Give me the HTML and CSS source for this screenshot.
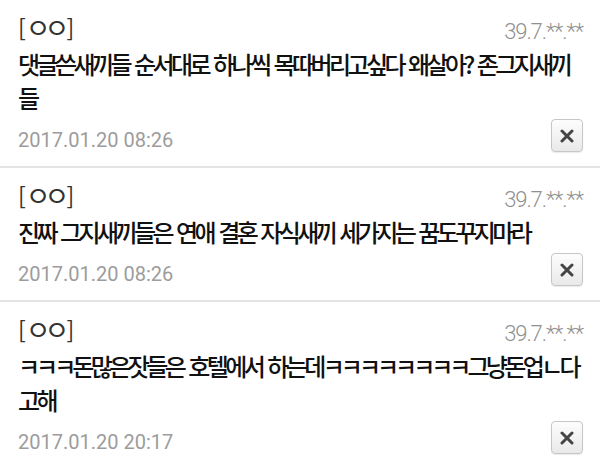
FILE: index.html
```html
<!DOCTYPE html>
<html lang="ko">
<head>
<meta charset="utf-8">
<link rel="stylesheet" href="styles.css">
</head>
<body>
<div class="list">
  <div class="comment">
    <div class="head">
      <span class="name">[<span class="nj">ㅇㅇ</span>]</span>
      <span class="ip">39.7.**.**</span>
    </div>
    <p class="text">댓글쓴새끼들 순서대로 하나씩 목따버리고싶다 왜살아? 존그지새끼들</p>
    <div class="foot">
      <span class="date">2017.01.20 08:26</span>
      <button class="del" type="button"><svg width="14" height="14" viewBox="0 0 14 14"><path d="M2 2 L12 12 M12 2 L2 12" stroke="#454545" stroke-width="3" stroke-linecap="round"/></svg></button>
    </div>
  </div>
  <div class="comment">
    <div class="head">
      <span class="name">[<span class="nj">ㅇㅇ</span>]</span>
      <span class="ip">39.7.**.**</span>
    </div>
    <p class="text">진짜 그지새끼들은 연애 결혼 자식새끼 세가지는 꿈도꾸지마라</p>
    <div class="foot">
      <span class="date">2017.01.20 08:26</span>
      <button class="del" type="button"><svg width="14" height="14" viewBox="0 0 14 14"><path d="M2 2 L12 12 M12 2 L2 12" stroke="#454545" stroke-width="3" stroke-linecap="round"/></svg></button>
    </div>
  </div>
  <div class="comment">
    <div class="head">
      <span class="name">[<span class="nj">ㅇㅇ</span>]</span>
      <span class="ip">39.7.**.**</span>
    </div>
    <p class="text"><span class="jamo">ㅋㅋㅋ</span>돈많은잣들은 호텔에서 하는데<span class="jamo">ㅋㅋㅋㅋㅋㅋㅋㅋ</span>그냥돈업<span class="jamo">ㄴ</span>다고해</p>
    <div class="foot">
      <span class="date">2017.01.20 20:17</span>
      <button class="del" type="button"><svg width="14" height="14" viewBox="0 0 14 14"><path d="M2 2 L12 12 M12 2 L2 12" stroke="#454545" stroke-width="3" stroke-linecap="round"/></svg></button>
    </div>
  </div>
</div>
</body>
</html>
```
FILE: styles.css
```css
html, body {
  margin: 0;
  padding: 0;
  background: #fff;
}
.list {
  width: 600px;
}
.comment {
  padding: 10px 17px 14px 18px;
  border-bottom: 2px solid #e4e4e4;
}
.head {
  display: flex;
  justify-content: space-between;
  align-items: baseline;
  height: 34px;
}
.name {
  font-family: "Noto Sans CJK KR", sans-serif;
  font-size: 23px;
  line-height: 34px;
  color: #333;
}
.nj {
  font-size: 27px;
  line-height: 34px;
  letter-spacing: -6px;
  margin-right: 3px;
}
.ip {
  font-family: Roboto, "Liberation Sans", sans-serif;
  font-weight: 300;
  font-size: 22px;
  color: #8f8f8f;
  letter-spacing: -1.1px;
  position: relative;
  top: 1px;
}
.text {
  margin: 3px 0 0;
  font-family: "Noto Sans CJK KR", sans-serif;
  font-weight: 500;
  font-size: 24px;
  line-height: 34px;
  color: #111;
  letter-spacing: -3.6px;
  word-spacing: 2px;
}
.jamo {
  letter-spacing: -4px;
}
.foot {
  display: flex;
  justify-content: space-between;
  align-items: flex-end;
  margin-top: 4px;
}
.date {
  font-family: Roboto, "Liberation Sans", sans-serif;
  font-size: 20px;
  line-height: 24px;
  color: #9c9c9c;
  letter-spacing: 0;
}
.del {
  width: 32px;
  height: 33px;
  padding: 0;
  display: flex;
  align-items: center;
  justify-content: center;
  border: 1px solid #c6c6c6;
  border-radius: 4px;
  background: linear-gradient(#fdfdfd, #e9e9e9);
  box-shadow: 0 1px 1px rgba(0, 0, 0, 0.08);
}
```
